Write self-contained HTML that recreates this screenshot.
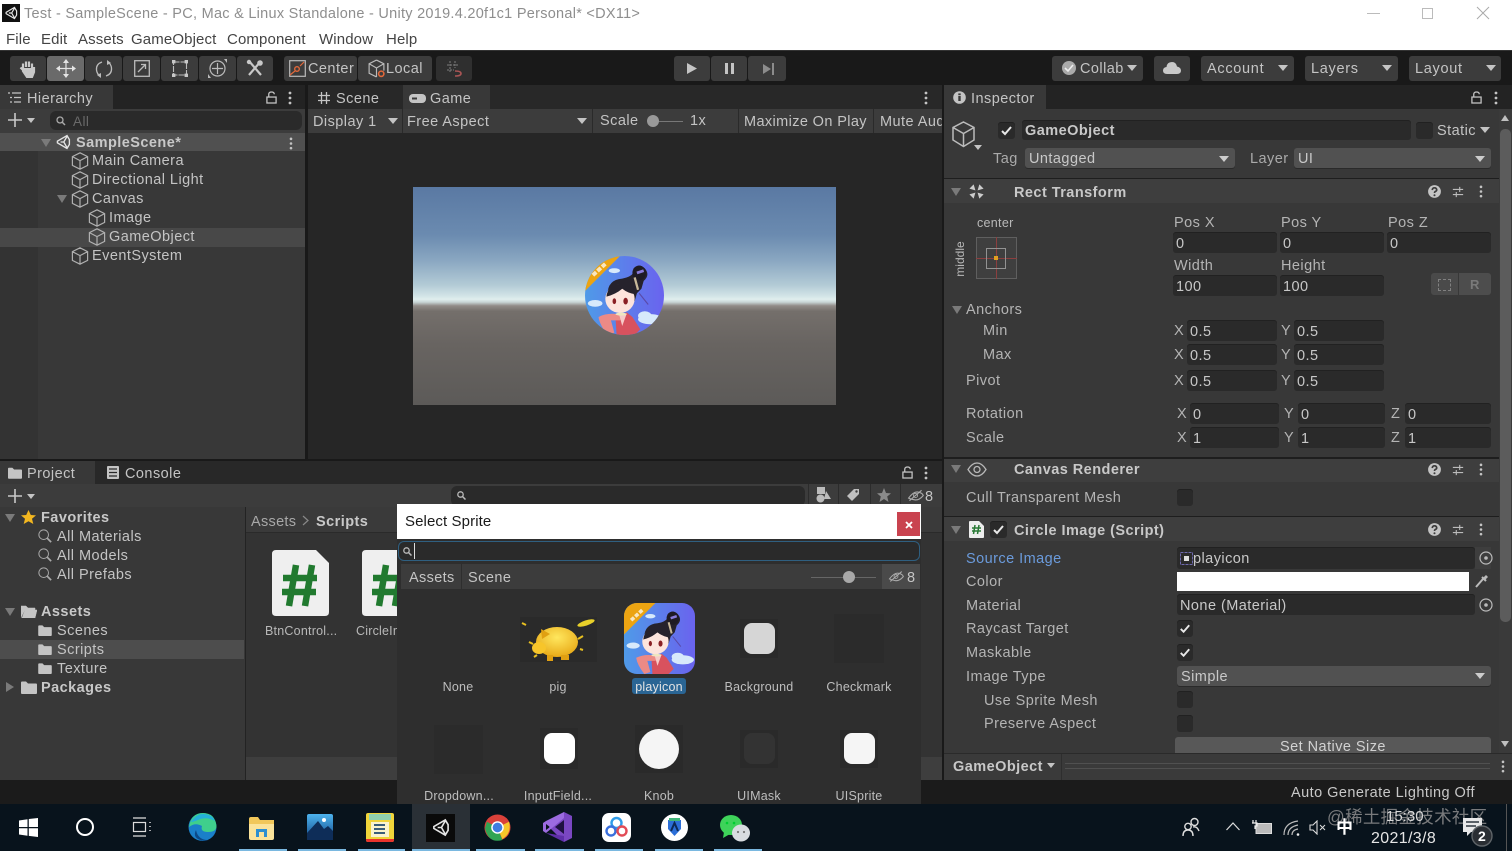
<!DOCTYPE html>
<html><head><meta charset="utf-8"><title>Unity</title>
<style>
*{box-sizing:border-box}
html,body{margin:0;padding:0;width:1512px;height:851px;overflow:hidden;background:#383838}
body{position:relative;font-family:"Liberation Sans","Noto Sans CJK SC",sans-serif;font-size:14.5px;letter-spacing:.45px;color:#c4c4c4;filter:blur(.3px)}
.a,.t,.f,.b,.cb,svg.a{position:absolute}
.t{white-space:nowrap;line-height:18px;height:18px;margin-top:1px}
.bd{font-weight:bold;color:#c8c8c8}
.f{background:#2a2a2a;border-radius:3px;box-shadow:inset 0 1px #212121;padding-left:3px;padding-top:1px;white-space:nowrap;overflow:hidden;color:#c8c8c8}
.b{background:#3c3c3c;border-radius:3px}
.cb{width:17px;height:17px;background:#2a2a2a;border-radius:3px;box-shadow:inset 0 1px #212121}
.dd{position:absolute;background:#515151;border-radius:3px;box-shadow:0 1px #2a2a2a;padding-left:4px;padding-top:1px;white-space:nowrap;color:#c8c8c8}
.ar{position:absolute;width:0;height:0;border-left:5px solid transparent;border-right:5px solid transparent;border-top:6px solid #c4c4c4}
.tri{position:absolute;width:0;height:0;border-left:5px solid transparent;border-right:5px solid transparent;border-top:8px solid #7a7a7a}
.tr{position:absolute;width:0;height:0;border-top:5px solid transparent;border-bottom:5px solid transparent;border-left:8px solid #7a7a7a}
.c{text-align:center;transform:translateX(-50%);font-size:12.5px;letter-spacing:.22px;color:#bdbdbd}
.m{color:#444;font-size:15px;letter-spacing:.12px;top:30px}
</style></head><body>
<svg width="0" height="0" style="position:absolute">
<defs>
<symbol id="cube" viewBox="0 0 18 18"><path d="M9 .8 16.6 4.6V13.4L9 17.2 1.400 13.400V4.600ZM1.400 4.600 9 8.600 16.600 4.600M9 8.600V17.200" fill="none" stroke="#b0b0b0" stroke-width="1.200"/></symbol>
<symbol id="folder" viewBox="0 0 16 13"><path d="M0 1.500Q0 .5 1 .5H5L7 2.500H15Q16 2.500 16 3.500V12Q16 13 15 13H1Q0 13 0 12Z" fill="#c4c4c4"/></symbol>
<symbol id="mag" viewBox="0 0 16 16"><circle cx="6.500" cy="6.500" r="5.500" fill="none" stroke="#aaa" stroke-width="1.100"/><path d="M10.500 10.500 15 15" stroke="#aaa" stroke-width="2"/></symbol>
<symbol id="chk" viewBox="0 0 17 17"><path d="M4 9 7 12 13 5" fill="none" stroke="#e8e8e8" stroke-width="2"/></symbol>
<symbol id="q" viewBox="0 0 14 14"><circle cx="7" cy="7" r="6.900" fill="#c4c4c4"/><path d="M4.600 5.400Q4.800 3 7 3T9.400 5.200Q9.400 6.300 7.800 7 7 7.400 7 8.600" fill="none" stroke="#3c3c3c" stroke-width="1.800"/><circle cx="7" cy="11" r="1.100" fill="#3c3c3c"/></symbol>
<symbol id="sl" viewBox="0 0 14 14"><path d="M1 4H13M1 10H13M9 1V7M5 7V13" stroke="#bbb" stroke-width="1.300" fill="none"/></symbol>
<symbol id="dots" viewBox="0 0 4 14"><circle cx="2" cy="2" r="1.400" fill="#c4c4c4"/><circle cx="2" cy="7" r="1.400" fill="#c4c4c4"/><circle cx="2" cy="12" r="1.400" fill="#c4c4c4"/></symbol>
<symbol id="lock" viewBox="0 0 12 14"><path d="M3 6V3.500Q3 1 6 1T9 3.500" fill="none" stroke="#c4c4c4" stroke-width="1.400"/><rect x="1" y="6.500" width="10" height="6.500" fill="none" stroke="#c4c4c4" stroke-width="1.400"/></symbol>
<symbol id="target" viewBox="0 0 14 14"><circle cx="7" cy="7" r="6" fill="none" stroke="#bbb" stroke-width="1.200"/><circle cx="7" cy="7" r="1.800" fill="#bbb"/></symbol>
<symbol id="unity" viewBox="0 0 20 20"><path d="M15 2 3 9V11L15 18 18 13V7ZM7 10H11M11 10 15 3M11 10 15 17" fill="none" stroke="#e4e4e4" stroke-width="1.700"/></symbol>
<symbol id="eye" viewBox="0 0 22 14"><path d="M3 10Q9 2 14 3T20 7Q15 13 10 12T3 10ZM4 13 18 1" fill="none" stroke="#aaa" stroke-width="1.300"/><circle cx="11" cy="7" r="2.400" fill="none" stroke="#aaa" stroke-width="1"/></symbol>
<symbol id="girl" viewBox="0 0 70 70" preserveAspectRatio="none">
<defs><linearGradient id="gb" x1="0" y1="0" x2="1" y2="0"><stop offset="0" stop-color="#4f9ae8"/><stop offset="1" stop-color="#6a63ee"/></linearGradient></defs>
<rect width="70" height="70" fill="url(#gb)"/>
<path d="M0 0H31L0 31Z" fill="#eca412"/>
<path d="M7 17 18 7" stroke="#f9e7c0" stroke-width="3.500" stroke-dasharray="4 1.500"/>
<g fill="#d7e9fb"><ellipse cx="26" cy="13" rx="5" ry="2.200"/><ellipse cx="9" cy="42" rx="6.500" ry="3"/><ellipse cx="58" cy="56" rx="11" ry="4.500"/><ellipse cx="53" cy="53" rx="6" ry="4"/></g>
<path d="M43 11Q48 6 53 11 58 17 52 22L50 29 46 33 44 40 30 30 20 34Q20 21 33 20 40 19 43 15Z" fill="#26222c"/>
<ellipse cx="48" cy="15" rx="6" ry="6.500" fill="#1f1b24"/>
<path d="M46 15 52 13" stroke="#8a7bd9" stroke-width="2.500"/>
<path d="M44 19 47 30" stroke="#c9b99a" stroke-width="2"/>
<path d="M48 33 56 43" stroke="#5a4aa8" stroke-width="1"/>
<ellipse cx="31" cy="38" rx="13" ry="12.500" fill="#fde4dc"/>
<path d="M19 36Q20 25 33 25 42 25 45 34 38 33 33 29 27 34 19 36Z" fill="#26222c"/>
<ellipse cx="36" cy="40" rx="2" ry="3" fill="#8a2024"/><ellipse cx="26" cy="40" rx="1.600" ry="2.600" fill="#8a2024"/>
<path d="M27 54 37 50 42 54 49 65 44 70H28Z" fill="#d8525e"/>
<path d="M12 54Q22 49 35 53L31 57 23 57 26 68 20 70Q13 61 12 54Z" fill="#ec8a86"/>
<path d="M30 51 37 51 33 62Z" fill="#f7cbc8"/>
<ellipse cx="32" cy="51.500" rx="5" ry="1.300" fill="#efe7c0"/>
</symbol>
</defs></svg>

<!-- title / menu -->
<div class="a" style="left:0;top:0;width:1512px;height:50px;background:#fff"></div>
<div class="a" style="left:2px;top:4px;width:18px;height:18px;background:#111"></div>
<svg class="a" style="left:4px;top:6px" width="14" height="14"><use href="#unity"/></svg>
<span class="t" style="left:24px;top:4px;color:#8e8e8e;font-size:14.5px;letter-spacing:.27px">Test - SampleScene - PC, Mac &amp; Linux Standalone - Unity 2019.4.20f1c1 Personal* &lt;DX11&gt;</span>
<span class="t m" style="left:6px">File</span>
<span class="t m" style="left:41px">Edit</span>
<span class="t m" style="left:78px">Assets</span>
<span class="t m" style="left:131px">GameObject</span>
<span class="t m" style="left:227px">Component</span>
<span class="t m" style="left:319px">Window</span>
<span class="t m" style="left:386px">Help</span>
<div class="a" style="left:1367px;top:13px;width:13px;height:1px;background:#bbb"></div>
<div class="a" style="left:1422px;top:8px;width:11px;height:11px;border:1px solid #bbb"></div>
<svg class="a" style="left:1476px;top:6px" width="14" height="14"><path d="M1 1 13 13M13 1 1 13" stroke="#aaa" stroke-width="1"/></svg>

<!-- toolbar -->
<div class="a" style="left:0;top:50px;width:1512px;height:35px;background:#191919;border-top:1px solid #333"></div>
<div class="b" style="left:10px;top:56px;width:36px;height:25px"></div>
<div class="b" style="left:47px;top:56px;width:37px;height:25px;background:#6a6a6a"></div>
<div class="b" style="left:85px;top:56px;width:37px;height:25px"></div>
<div class="b" style="left:123px;top:56px;width:37px;height:25px"></div>
<div class="b" style="left:161px;top:56px;width:37px;height:25px"></div>
<div class="b" style="left:199px;top:56px;width:37px;height:25px"></div>
<div class="b" style="left:237px;top:56px;width:36px;height:25px"></div>
<svg class="a" style="left:19px;top:59px" width="18" height="19" viewBox="0 0 18 19"><path d="M4 9V4.500M7 8V2.500M10 8V2.500M13 9V4.500M4 8 4 12 8 18H13L15 13V8M4 11 1.500 8.500" stroke="#c8c8c8" stroke-width="2.200" fill="none"/><path d="M4 9H15V14L13 18H8L4 13Z" fill="#c8c8c8"/></svg>
<svg class="a" style="left:56px;top:59px" width="20" height="19" viewBox="0 0 20 19"><path d="M10 3V16M3 9.500H17" stroke="#e4e4e4" stroke-width="1.200"/><path d="M10 0 13 4H7ZM10 19 13 15H7ZM0 9.500 4 6.500V12.500ZM20 9.500 16 6.500V12.500Z" fill="#e4e4e4"/></svg>
<svg class="a" style="left:95px;top:60px" width="18" height="18" viewBox="0 0 18 18"><path d="M7 2Q1 4 1.500 10 2 14 5 16M11 16Q17 14 16.500 8 16 4 13 2" fill="none" stroke="#bbb" stroke-width="1.300"/><path d="M12 0V5L16 3ZM6 18V13L2 15Z" fill="#bbb"/></svg>
<svg class="a" style="left:134px;top:60px" width="16" height="17" viewBox="0 0 16 17"><rect x=".7" y=".7" width="14.600" height="15.600" fill="none" stroke="#bbb" stroke-width="1.300"/><path d="M4 12 11 5M7 4.500H11.500V9" fill="none" stroke="#bbb" stroke-width="1.300"/></svg>
<svg class="a" style="left:172px;top:60px" width="16" height="17" viewBox="0 0 16 17"><rect x="1.500" y="2" width="13" height="13" fill="none" stroke="#bbb" stroke-width="1.100" stroke-dasharray="6 1"/><g fill="#c8c8c8"><rect width="3.400" height="3.400"/><rect x="12.600" width="3.400" height="3.400"/><rect y="13.600" width="3.400" height="3.400"/><rect x="12.600" y="13.600" width="3.400" height="3.400"/></g></svg>
<svg class="a" style="left:208px;top:59px" width="19" height="19" viewBox="0 0 19 19"><circle cx="9.500" cy="9.500" r="7.500" fill="none" stroke="#bbb" stroke-width="1.200"/><path d="M9.500 4V15M4 9.500H15" stroke="#bbb" stroke-width="1.200"/><path d="M16 0 19 0 19 4ZM0 19 3 19 0 15Z" fill="#bbb"/></svg>
<svg class="a" style="left:246px;top:59px" width="18" height="18" viewBox="0 0 18 18"><path d="M3 2 15 16M15 2 3 16" stroke="#c8c8c8" stroke-width="2.200"/><circle cx="3" cy="3" r="2.200" fill="#c8c8c8"/><circle cx="14" cy="4" r="2.800" fill="#c8c8c8"/></svg>
<div class="b" style="left:284px;top:56px;width:73px;height:25px"></div>
<div class="b" style="left:358px;top:56px;width:74px;height:25px"></div>
<div class="b" style="left:436px;top:56px;width:36px;height:25px;background:#2f2f2f"></div>
<svg class="a" style="left:289px;top:60px" width="17" height="17" viewBox="0 0 17 17"><rect x=".7" y=".7" width="15.600" height="15.600" fill="none" stroke="#bbb" stroke-width="1.200"/><circle cx="8" cy="9" r="2.300" fill="none" stroke="#e2683a" stroke-width="1.400"/><path d="M1 15 6 11M11 6 15 2" stroke="#e2683a" stroke-width="1.200"/></svg>
<span class="t" style="left:308px;top:59px">Center</span>
<svg class="a" style="left:367px;top:59px" width="19" height="19" viewBox="0 0 18 18"><path d="M9 1 16 4.500V11M9 17 2 13.500V4.500L9 1M2 4.500 9 8.500 16 4.500M9 8.500V17" fill="none" stroke="#bbb" stroke-width="1.100"/><circle cx="13.500" cy="14" r="2.500" fill="none" stroke="#e2683a" stroke-width="1.500"/></svg>
<span class="t" style="left:386px;top:59px">Local</span>
<svg class="a" style="left:446px;top:60px" width="16" height="17" viewBox="0 0 16 17"><path d="M1 5H12M1 10H8M4 1V13M9 1V8" stroke="#7c7c7c" stroke-width="1" stroke-dasharray="2 1"/><path d="M9 11Q15 11 15 13.500T9 16" fill="none" stroke="#a55" stroke-width="1.600"/></svg>
<div class="b" style="left:674px;top:56px;width:36px;height:25px"></div>
<div class="b" style="left:711px;top:56px;width:36px;height:25px"></div>
<div class="b" style="left:748px;top:56px;width:38px;height:25px"></div>
<svg class="a" style="left:686px;top:62px" width="12" height="13"><path d="M1 1 11 6.500 1 12Z" fill="#c4c4c4"/></svg>
<div class="a" style="left:725px;top:63px;width:3px;height:11px;background:#c4c4c4"></div>
<div class="a" style="left:731px;top:63px;width:3px;height:11px;background:#c4c4c4"></div>
<svg class="a" style="left:762px;top:63px" width="13" height="12"><path d="M1 1 9 6 1 11Z" fill="#8c8c8c"/><rect x="10" y="0" width="2" height="12" fill="#8c8c8c"/></svg>
<div class="b" style="left:1052px;top:56px;width:91px;height:25px"></div>
<div class="a" style="left:1062px;top:61px;width:14px;height:14px;border-radius:50%;background:#aaa"></div>
<svg class="a" style="left:1064px;top:63px" width="10" height="10"><path d="M1 5 4 8 9 2" fill="none" stroke="#eee" stroke-width="1.600"/></svg>
<span class="t" style="left:1080px;top:59px">Collab</span>
<div class="ar" style="left:1127px;top:65px"></div>
<div class="b" style="left:1154px;top:56px;width:36px;height:25px"></div>
<svg class="a" style="left:1163px;top:61px" width="18" height="14" viewBox="0 0 18 14"><path d="M4 13Q0 13 0 9.500 0 6.500 3.500 6 4 1 9 1 13 1 14 5.500 18 6.500 18 9.500 18 13 14 13Z" fill="#c8c8c8"/></svg>
<div class="b" style="left:1201px;top:56px;width:93px;height:25px"></div>
<span class="t" style="left:1207px;top:59px;letter-spacing:.7px">Account</span><div class="ar" style="left:1278px;top:65px"></div>
<div class="b" style="left:1305px;top:56px;width:93px;height:25px"></div>
<span class="t" style="left:1311px;top:59px;letter-spacing:.7px">Layers</span><div class="ar" style="left:1382px;top:65px"></div>
<div class="b" style="left:1409px;top:56px;width:92px;height:25px"></div>
<span class="t" style="left:1415px;top:59px;letter-spacing:.7px">Layout</span><div class="ar" style="left:1486px;top:65px"></div>

<!-- Hierarchy -->
<div class="a" style="left:0;top:85px;width:305px;height:24px;background:#232323"></div>
<div class="a" style="left:0;top:85px;width:113px;height:24px;background:#383838"></div>
<svg class="a" style="left:8px;top:92px" width="13" height="11"><path d="M0 1H2M4 1H13M2 5.500H4M6 5.500H13M2 10H4M6 10H13" stroke="#c4c4c4" stroke-width="1.300"/></svg>
<span class="t" style="left:27px;top:89px">Hierarchy</span>
<svg class="a" style="left:266px;top:91px" width="11" height="13"><use href="#lock"/></svg>
<svg class="a" style="left:288px;top:91px" width="4" height="14"><use href="#dots"/></svg>
<div class="a" style="left:0;top:109px;width:305px;height:24px;background:#3c3c3c"></div>
<svg class="a" style="left:8px;top:113px" width="14" height="14"><path d="M7 0V14M0 7H14" stroke="#c8c8c8" stroke-width="1.600"/></svg>
<div class="ar" style="left:27px;top:118px;border-left-width:4px;border-right-width:4px;border-top-width:5px"></div>
<div class="a" style="left:50px;top:111px;width:252px;height:19px;background:#2a2a2a;border-radius:6px"></div>
<svg class="a" style="left:56px;top:116px" width="11" height="10"><circle cx="4" cy="4" r="3" fill="none" stroke="#aaa" stroke-width="1.300"/><path d="M6 6 9 9" stroke="#aaa" stroke-width="1.500"/></svg>
<span class="t" style="left:73px;top:112px;color:#6a6a6a;font-size:13.500px">All</span>
<div class="a" style="left:0;top:133px;width:38px;height:326px;background:#333"></div>
<div class="a" style="left:38px;top:133px;width:267px;height:326px;background:#383838"></div>
<div class="a" style="left:0;top:133px;width:305px;height:18px;background:#505050"></div>
<div class="a" style="left:0;top:228px;width:305px;height:19px;background:#484848"></div>
<div class="tri" style="left:41px;top:139px"></div>
<svg class="a" style="left:55px;top:134px" width="16" height="16"><use href="#unity"/></svg>
<span class="t bd" style="left:76px;top:133px">SampleScene*</span>
<svg class="a" style="left:289px;top:137px" width="4" height="13"><use href="#dots"/></svg>
<svg class="a" style="left:71px;top:152px" width="18" height="18"><use href="#cube"/></svg><span class="t" style="left:92px;top:151px">Main Camera</span>
<svg class="a" style="left:71px;top:171px" width="18" height="18"><use href="#cube"/></svg><span class="t" style="left:92px;top:170px">Directional Light</span>
<div class="tri" style="left:57px;top:195px"></div>
<svg class="a" style="left:71px;top:190px" width="18" height="18"><use href="#cube"/></svg><span class="t" style="left:92px;top:189px">Canvas</span>
<svg class="a" style="left:88px;top:209px" width="18" height="18"><use href="#cube"/></svg><span class="t" style="left:109px;top:208px">Image</span>
<svg class="a" style="left:88px;top:228px" width="18" height="18"><use href="#cube"/></svg><span class="t" style="left:109px;top:227px">GameObject</span>
<svg class="a" style="left:71px;top:247px" width="18" height="18"><use href="#cube"/></svg><span class="t" style="left:92px;top:246px">EventSystem</span>

<!-- dividers -->
<div class="a" style="left:305px;top:85px;width:3px;height:375px;background:#191919"></div>
<div class="a" style="left:0;top:459px;width:943px;height:2px;background:#191919"></div>
<div class="a" style="left:942px;top:85px;width:2px;height:695px;background:#191919"></div>

<!-- Scene/Game -->
<div class="a" style="left:308px;top:85px;width:634px;height:24px;background:#282828"></div>
<div class="a" style="left:403px;top:85px;width:87px;height:24px;background:#383838"></div>
<svg class="a" style="left:318px;top:92px" width="12" height="12"><path d="M3.500 0V12M8.500 0V12M0 3.500H12M0 8.500H12" stroke="#c4c4c4" stroke-width="1.300"/></svg>
<span class="t" style="left:336px;top:89px">Scene</span>
<svg class="a" style="left:409px;top:94px" width="18" height="10"><rect width="17" height="9" rx="4" fill="#c4c4c4"/><rect x="3" y="3.500" width="5" height="2" fill="#383838"/></svg>
<span class="t" style="left:430px;top:89px">Game</span>
<svg class="a" style="left:924px;top:91px" width="4" height="14"><use href="#dots"/></svg>
<div class="a" style="left:308px;top:109px;width:634px;height:24px;background:#3c3c3c"></div>
<span class="t" style="left:313px;top:112px">Display 1</span><div class="ar" style="left:388px;top:118px"></div>
<div class="a" style="left:402px;top:109px;width:1px;height:24px;background:#2a2a2a"></div>
<span class="t" style="left:407px;top:112px">Free Aspect</span><div class="ar" style="left:577px;top:118px"></div>
<div class="a" style="left:592px;top:109px;width:1px;height:24px;background:#2a2a2a"></div>
<span class="t" style="left:600px;top:111px">Scale</span>
<div class="a" style="left:650px;top:121px;width:33px;height:1px;background:#777"></div>
<div class="a" style="left:647px;top:115px;width:12px;height:12px;border-radius:50%;background:#999"></div>
<span class="t" style="left:690px;top:111px">1x</span>
<div class="a" style="left:738px;top:109px;width:1px;height:24px;background:#2a2a2a"></div>
<span class="t" style="left:744px;top:112px;letter-spacing:.38px">Maximize On Play</span>
<div class="a" style="left:873px;top:109px;width:1px;height:24px;background:#2a2a2a"></div>
<div class="a" style="left:874px;top:109px;width:68px;height:24px;overflow:hidden"><span class="t" style="left:6px;top:3px">Mute Audio</span></div>
<div class="a" style="left:308px;top:133px;width:634px;height:326px;background:#262626"></div>
<div class="a" style="left:413px;top:187px;width:423px;height:218px;background:linear-gradient(180deg,#5a79a3 0%,#6b8bb0 22%,#8ba8c2 34%,#b3cbd6 45%,#d2e4e7 50%,#e0eeee 51.500%,#c9d6d6 52.800%,#918c88 54.500%,#746f6b 57%,#686461 72%,#5c5a58 100%)"></div>
<svg class="a" style="left:585px;top:256px;border-radius:50%" width="79" height="79"><use href="#girl" width="79" height="79"/></svg>

<!-- Inspector -->
<div class="a" style="left:944px;top:85px;width:568px;height:24px;background:#232323"></div>
<div class="a" style="left:944px;top:85px;width:102px;height:24px;background:#383838"></div>
<div class="a" style="left:944px;top:109px;width:568px;height:644px;background:#383838"></div>
<svg class="a" style="left:953px;top:91px" width="13" height="13" viewBox="0 0 13 13"><circle cx="6.500" cy="6.500" r="6.300" fill="#c4c4c4"/><rect x="5.300" y="5" width="2.400" height="5" fill="#383838"/><rect x="5.300" y="2.400" width="2.400" height="1.800" fill="#383838"/></svg>
<span class="t" style="left:971px;top:89px">Inspector</span>
<svg class="a" style="left:1471px;top:91px" width="11" height="13"><use href="#lock"/></svg>
<svg class="a" style="left:1494px;top:91px" width="4" height="14"><use href="#dots"/></svg>
<svg class="a" style="left:951px;top:120px" width="25" height="28"><path d="M12.500 2 23 7.500V20L12.500 26.500 2 20V7.500ZM2 7.500 12.500 13.500 23 7.500M12.500 13.500V26.500" fill="none" stroke="#bbb" stroke-width="1.500"/></svg>
<div class="ar" style="left:974px;top:145px;border-left-width:4px;border-right-width:4px;border-top-width:5px"></div>
<div class="cb" style="left:998px;top:122px"></div><svg class="a" style="left:998px;top:122px" width="17" height="17"><use href="#chk"/></svg>
<div class="f" style="left:1022px;top:120px;width:389px;height:20px;line-height:20px;font-weight:bold;padding-left:3px">GameObject</div>
<div class="cb" style="left:1416px;top:122px"></div>
<span class="t" style="left:1437px;top:121px">Static</span><div class="ar" style="left:1480px;top:127px"></div>
<span class="t" style="left:993px;top:149px;color:#aaa">Tag</span>
<div class="dd" style="left:1025px;top:148px;width:210px;height:20px;line-height:20px">Untagged</div><div class="ar" style="left:1219px;top:156px;border-top-color:#ccc"></div>
<span class="t" style="left:1250px;top:149px;color:#aaa">Layer</span>
<div class="dd" style="left:1294px;top:148px;width:197px;height:20px;line-height:20px">UI</div><div class="ar" style="left:1475px;top:156px;border-top-color:#ccc"></div>
<div class="a" style="left:944px;top:178px;width:555px;height:1px;background:#1e1e1e"></div>
<div class="a" style="left:944px;top:179px;width:555px;height:24px;background:#3e3e3e"></div>
<div class="tri" style="left:951px;top:188px"></div>
<svg class="a" style="left:969px;top:184px" width="15" height="15" viewBox="0 0 15 15"><path d="M6 6 1 4.500 4.500 1ZM9 6 14 4.500 10.500 1ZM6 9 1 10.500 4.500 14ZM9 9 14 10.500 10.500 14Z" fill="#ccc" stroke="#ccc" stroke-width=".6"/></svg>
<span class="t bd" style="left:1014px;top:183px">Rect Transform</span>
<svg class="a" style="left:1428px;top:185px" width="13" height="13"><use href="#q"/></svg>
<svg class="a" style="left:1452px;top:186px" width="12" height="12"><use href="#sl"/></svg>
<svg class="a" style="left:1479px;top:185px" width="4" height="13"><use href="#dots"/></svg>

<span class="t" style="left:977px;top:213px;font-size:12.500px;letter-spacing:.3px;color:#b8b8b8">center</span>
<span class="t" style="left:936px;top:249px;width:48px;text-align:center;transform:rotate(-90deg);font-size:12px;letter-spacing:0;color:#b8b8b8">middle</span>
<div class="a" style="left:976px;top:237px;width:41px;height:42px;background:#3f3f3f;border:1px solid #5f5f5f"></div>
<div class="a" style="left:976px;top:258px;width:41px;height:1px;background:#8c3f3f"></div>
<div class="a" style="left:996px;top:237px;width:1px;height:42px;background:#8c3f3f"></div>
<div class="a" style="left:986px;top:248px;width:20px;height:21px;border:1px solid #929292"></div>
<div class="a" style="left:994px;top:256px;width:4px;height:4px;background:#e0a020"></div>

<span class="t" style="left:1174px;top:213px;color:#b4b4b4">Pos X</span>
<span class="t" style="left:1281px;top:213px;color:#b4b4b4">Pos Y</span>
<span class="t" style="left:1388px;top:213px;color:#b4b4b4">Pos Z</span>
<div class="f" style="left:1173px;top:232px;width:104px;height:21px;line-height:22px">0</div>
<div class="f" style="left:1280px;top:232px;width:104px;height:21px;line-height:22px">0</div>
<div class="f" style="left:1387px;top:232px;width:104px;height:21px;line-height:22px">0</div>
<span class="t" style="left:1174px;top:256px;color:#b4b4b4">Width</span>
<span class="t" style="left:1281px;top:256px;color:#b4b4b4">Height</span>
<div class="f" style="left:1173px;top:275px;width:104px;height:21px;line-height:22px">100</div>
<div class="f" style="left:1280px;top:275px;width:104px;height:21px;line-height:22px">100</div>
<div class="a" style="left:1431px;top:273px;width:27px;height:22px;background:#4a4a4a;border-radius:3px 0 0 3px"></div>
<div class="a" style="left:1459px;top:273px;width:32px;height:22px;background:#4d4d4d;border-radius:0 3px 3px 0"></div>
<div class="a" style="left:1438px;top:279px;width:13px;height:12px;border:1px dashed #808080"></div>
<span class="t bd" style="left:1470px;top:275px;color:#7a7a7a;font-size:13px">R</span>

<div class="tri" style="left:952px;top:306px"></div>
<span class="t" style="left:966px;top:300px;color:#b4b4b4">Anchors</span>
<span class="t" style="left:983px;top:321px;color:#b4b4b4">Min</span>
<span class="t" style="left:1174px;top:321px;color:#b4b4b4">X</span><div class="f" style="left:1187px;top:320px;width:90px;height:21px;line-height:22px">0.5</div>
<span class="t" style="left:1281px;top:321px;color:#b4b4b4">Y</span><div class="f" style="left:1294px;top:320px;width:90px;height:21px;line-height:22px">0.5</div>
<span class="t" style="left:983px;top:345px;color:#b4b4b4">Max</span>
<span class="t" style="left:1174px;top:345px;color:#b4b4b4">X</span><div class="f" style="left:1187px;top:344px;width:90px;height:21px;line-height:22px">0.5</div>
<span class="t" style="left:1281px;top:345px;color:#b4b4b4">Y</span><div class="f" style="left:1294px;top:344px;width:90px;height:21px;line-height:22px">0.5</div>
<span class="t" style="left:966px;top:371px;color:#b4b4b4">Pivot</span>
<span class="t" style="left:1174px;top:371px;color:#b4b4b4">X</span><div class="f" style="left:1187px;top:370px;width:90px;height:21px;line-height:22px">0.5</div>
<span class="t" style="left:1281px;top:371px;color:#b4b4b4">Y</span><div class="f" style="left:1294px;top:370px;width:90px;height:21px;line-height:22px">0.5</div>
<span class="t" style="left:966px;top:404px;color:#b4b4b4">Rotation</span>
<span class="t" style="left:1177px;top:404px;color:#b4b4b4">X</span><div class="f" style="left:1190px;top:403px;width:89px;height:21px;line-height:22px">0</div>
<span class="t" style="left:1284px;top:404px;color:#b4b4b4">Y</span><div class="f" style="left:1298px;top:403px;width:87px;height:21px;line-height:22px">0</div>
<span class="t" style="left:1391px;top:404px;color:#b4b4b4">Z</span><div class="f" style="left:1405px;top:403px;width:86px;height:21px;line-height:22px">0</div>
<span class="t" style="left:966px;top:428px;color:#b4b4b4">Scale</span>
<span class="t" style="left:1177px;top:428px;color:#b4b4b4">X</span><div class="f" style="left:1190px;top:427px;width:89px;height:21px;line-height:22px">1</div>
<span class="t" style="left:1284px;top:428px;color:#b4b4b4">Y</span><div class="f" style="left:1298px;top:427px;width:87px;height:21px;line-height:22px">1</div>
<span class="t" style="left:1391px;top:428px;color:#b4b4b4">Z</span><div class="f" style="left:1405px;top:427px;width:86px;height:21px;line-height:22px">1</div>

<div class="a" style="left:944px;top:457px;width:555px;height:2px;background:#1e1e1e"></div>
<div class="a" style="left:944px;top:459px;width:555px;height:23px;background:#3e3e3e"></div>
<div class="tri" style="left:951px;top:465px"></div>
<svg class="a" style="left:967px;top:462px" width="20" height="15" viewBox="0 0 20 15"><path d="M1 7.500Q5 1 10 1T19 7.500Q15 14 10 14T1 7.500Z" fill="none" stroke="#b8b8b8" stroke-width="1.300"/><circle cx="10" cy="7.500" r="3" fill="none" stroke="#b8b8b8" stroke-width="1.300"/></svg>
<span class="t bd" style="left:1014px;top:460px">Canvas Renderer</span>
<svg class="a" style="left:1428px;top:463px" width="13" height="13"><use href="#q"/></svg>
<svg class="a" style="left:1452px;top:464px" width="12" height="12"><use href="#sl"/></svg>
<svg class="a" style="left:1479px;top:463px" width="4" height="13"><use href="#dots"/></svg>
<span class="t" style="left:966px;top:488px;color:#b4b4b4">Cull Transparent Mesh</span>
<div class="cb" style="left:1177px;top:489px;width:16px"></div>

<div class="a" style="left:944px;top:516px;width:555px;height:1px;background:#1e1e1e"></div>
<div class="a" style="left:944px;top:517px;width:555px;height:24px;background:#3e3e3e"></div>
<div class="tri" style="left:951px;top:526px"></div>
<svg class="a" style="left:969px;top:521px" width="15" height="17" viewBox="0 0 15 17"><path d="M0 1Q0 0 1 0H10L15 5V16Q15 17 14 17H1Q0 17 0 16Z" fill="#eee"/><path d="M6 4 4.500 13M10 4 8.500 13M3 7H12M3 10H12" stroke="#2a7a36" stroke-width="1.500"/></svg>
<div class="cb" style="left:990px;top:521px"></div><svg class="a" style="left:990px;top:521px" width="17" height="17"><use href="#chk"/></svg>
<span class="t bd" style="left:1014px;top:521px">Circle Image (Script)</span>
<svg class="a" style="left:1428px;top:523px" width="13" height="13"><use href="#q"/></svg>
<svg class="a" style="left:1452px;top:524px" width="12" height="12"><use href="#sl"/></svg>
<svg class="a" style="left:1479px;top:523px" width="4" height="13"><use href="#dots"/></svg>

<span class="t" style="left:966px;top:549px;color:#6b9bdc">Source Image</span>
<div class="f" style="left:1177px;top:547px;width:298px;height:22px;line-height:23px;padding-left:16px">playicon</div>
<svg class="a" style="left:1180px;top:552px" width="13" height="13"><rect x=".5" y=".5" width="12" height="12" fill="none" stroke="#6e69ad" stroke-dasharray="3 1"/><rect x="4" y="4" width="5" height="5" fill="#ddd"/></svg>
<div class="a" style="left:1475px;top:547px;width:16px;height:22px;background:#3e3e3e"></div>
<svg class="a" style="left:1479px;top:551px" width="14" height="14"><use href="#target"/></svg>
<span class="t" style="left:966px;top:572px;color:#b4b4b4">Color</span>
<div class="a" style="left:1177px;top:572px;width:292px;height:19px;background:#fff"></div>
<svg class="a" style="left:1475px;top:574px" width="13" height="14" viewBox="0 0 13 14"><path d="M1 13 8 5M7 3 11 7" stroke="#bbb" stroke-width="2"/><path d="M8 4 11 1 13 3 10 6Z" fill="#bbb"/></svg>
<span class="t" style="left:966px;top:596px;color:#b4b4b4">Material</span>
<div class="f" style="left:1177px;top:594px;width:298px;height:21px;line-height:22px">None (Material)</div>
<svg class="a" style="left:1479px;top:598px" width="14" height="14"><use href="#target"/></svg>
<span class="t" style="left:966px;top:619px;color:#b4b4b4">Raycast Target</span>
<div class="cb" style="left:1177px;top:620px;width:16px"></div><svg class="a" style="left:1177px;top:620px" width="16" height="17"><use href="#chk"/></svg>
<span class="t" style="left:966px;top:643px;color:#b4b4b4">Maskable</span>
<div class="cb" style="left:1177px;top:644px;width:16px"></div><svg class="a" style="left:1177px;top:644px" width="16" height="17"><use href="#chk"/></svg>
<span class="t" style="left:966px;top:667px;color:#b4b4b4">Image Type</span>
<div class="dd" style="left:1177px;top:666px;width:314px;height:20px;line-height:20px">Simple</div><div class="ar" style="left:1475px;top:673px;border-top-color:#ccc"></div>
<span class="t" style="left:984px;top:691px;color:#b4b4b4">Use Sprite Mesh</span>
<div class="cb" style="left:1177px;top:691px;width:16px"></div>
<span class="t" style="left:984px;top:714px;color:#b4b4b4">Preserve Aspect</span>
<div class="cb" style="left:1177px;top:715px;width:16px"></div>
<div class="a" style="left:1175px;top:737px;width:316px;height:16px;background:#585858;border-radius:3px 3px 0 0;overflow:hidden;text-align:center;line-height:21px;color:#d2d2d2">Set Native Size</div>

<div class="a" style="left:1499px;top:109px;width:13px;height:644px;background:#3a3a3a"></div>
<div class="a" style="left:1500px;top:129px;width:11px;height:493px;background:#5c5c5c;border-radius:5px"></div>
<div class="ar" style="left:1501px;top:115px;border-top:0;border-bottom:6px solid #c0c0c0;border-left-width:4px;border-right-width:4px"></div>
<div class="ar" style="left:1501px;top:741px;border-left-width:4px;border-right-width:4px;border-top-color:#c0c0c0"></div>

<div class="a" style="left:944px;top:753px;width:568px;height:27px;background:#3a3a3a;border-top:1px solid #2a2a2a"></div>
<div class="a" style="left:1061px;top:754px;width:1px;height:26px;background:#2e2e2e"></div>
<span class="t bd" style="left:953px;top:757px">GameObject</span>
<div class="ar" style="left:1047px;top:763px;border-left-width:4px;border-right-width:4px;border-top-width:5px"></div>
<div class="a" style="left:1065px;top:763px;width:425px;height:1px;background:#505050"></div>
<div class="a" style="left:1065px;top:768px;width:425px;height:1px;background:#505050"></div>
<svg class="a" style="left:1501px;top:760px" width="4" height="13"><use href="#dots"/></svg>

<!-- Project -->
<div class="a" style="left:0;top:461px;width:942px;height:23px;background:#282828"></div>
<div class="a" style="left:0;top:461px;width:95px;height:23px;background:#383838"></div>
<svg class="a" style="left:8px;top:467px" width="14" height="12"><use href="#folder"/></svg>
<span class="t" style="left:27px;top:464px">Project</span>
<svg class="a" style="left:107px;top:466px" width="12" height="13" viewBox="0 0 12 13"><rect width="12" height="13" rx="1" fill="#c4c4c4"/><path d="M2 3H10M2 6.500H10M2 10H10" stroke="#282828" stroke-width="1.200"/></svg>
<span class="t" style="left:125px;top:464px">Console</span>
<svg class="a" style="left:902px;top:466px" width="11" height="13"><use href="#lock"/></svg>
<svg class="a" style="left:924px;top:466px" width="4" height="14"><use href="#dots"/></svg>
<div class="a" style="left:0;top:484px;width:942px;height:23px;background:#3c3c3c"></div>
<svg class="a" style="left:8px;top:489px" width="14" height="14"><path d="M7 0V14M0 7H14" stroke="#c8c8c8" stroke-width="1.600"/></svg>
<div class="ar" style="left:27px;top:494px;border-left-width:4px;border-right-width:4px;border-top-width:5px"></div>
<div class="a" style="left:451px;top:486px;width:354px;height:20px;background:#2a2a2a;border-radius:6px"></div>
<svg class="a" style="left:457px;top:491px" width="9" height="9"><circle cx="3.500" cy="3.500" r="2.700" fill="none" stroke="#bbb" stroke-width="1.300"/><path d="M5.500 5.500 8.500 8.500" stroke="#bbb" stroke-width="1.500"/></svg>
<div class="a" style="left:808px;top:484px;width:1px;height:20px;background:#2c2c2c"></div>
<div class="a" style="left:838px;top:484px;width:1px;height:20px;background:#2c2c2c"></div>
<div class="a" style="left:870px;top:484px;width:1px;height:20px;background:#2c2c2c"></div>
<div class="a" style="left:900px;top:484px;width:1px;height:20px;background:#2c2c2c"></div>
<svg class="a" style="left:816px;top:487px" width="15" height="16"><rect x="1" y="0" width="8" height="7" fill="#bbb"/><circle cx="4.500" cy="11.500" r="4" fill="#bbb"/><path d="M10 4 15 12H8Z" fill="#bbb"/></svg>
<svg class="a" style="left:846px;top:488px" width="14" height="14"><path d="M1 8 8 1H13V6L6 13Z" fill="#c0c0c0"/><circle cx="10.500" cy="3.500" r="1.200" fill="#3c3c3c"/></svg>
<svg class="a" style="left:877px;top:488px" width="14" height="14"><path d="M7 0 9 5 14 5.400 10.200 8.500 11.500 14 7 11 2.500 14 3.800 8.500 0 5.400 5 5Z" fill="#8a8a8a"/></svg>
<svg class="a" style="left:906px;top:489px" width="19" height="13"><use href="#eye"/></svg>
<span class="t" style="left:925px;top:487px">8</span>

<div class="a" style="left:0;top:507px;width:245px;height:273px;background:#383838"></div>
<div class="a" style="left:245px;top:507px;width:1px;height:273px;background:#232323"></div>
<div class="a" style="left:246px;top:507px;width:696px;height:26px;background:#3a3a3a;border-bottom:1px solid #2a2a2a"></div>
<div class="a" style="left:246px;top:533px;width:696px;height:224px;background:#333"></div>
<div class="a" style="left:246px;top:757px;width:696px;height:23px;background:#3e3e3e"></div>
<div class="tri" style="left:5px;top:514px"></div>
<svg class="a" style="left:21px;top:510px" width="15" height="14"><path d="M7.500 0 9.800 5 15 5.400 11 8.800 12.300 14 7.500 11.200 2.700 14 4 8.800 0 5.400 5.200 5Z" fill="#f3b720"/></svg>
<span class="t bd" style="left:41px;top:508px">Favorites</span>
<svg class="a" style="left:38px;top:529px" width="14" height="14"><use href="#mag"/></svg><span class="t" style="left:57px;top:527px">All Materials</span>
<svg class="a" style="left:38px;top:548px" width="14" height="14"><use href="#mag"/></svg><span class="t" style="left:57px;top:546px">All Models</span>
<svg class="a" style="left:38px;top:567px" width="14" height="14"><use href="#mag"/></svg><span class="t" style="left:57px;top:565px">All Prefabs</span>
<div class="tri" style="left:5px;top:608px"></div>
<svg class="a" style="left:21px;top:605px" width="16" height="13" viewBox="0 0 16 13"><path d="M0 13V1H5L7 3H14V5H4L1 13H14L16 5H4" fill="#c4c4c4" stroke="#c4c4c4" stroke-width=".5"/></svg>
<span class="t bd" style="left:41px;top:602px">Assets</span>
<div class="a" style="left:0;top:640px;width:244px;height:19px;background:#4d4d4d"></div>
<svg class="a" style="left:38px;top:625px" width="14" height="11"><use href="#folder"/></svg><span class="t" style="left:57px;top:621px">Scenes</span>
<svg class="a" style="left:38px;top:644px" width="14" height="11"><use href="#folder"/></svg><span class="t" style="left:57px;top:640px">Scripts</span>
<svg class="a" style="left:38px;top:663px" width="14" height="11"><use href="#folder"/></svg><span class="t" style="left:57px;top:659px">Texture</span>
<div class="tr" style="left:6px;top:682px"></div>
<svg class="a" style="left:21px;top:681px" width="16" height="13"><use href="#folder"/></svg>
<span class="t bd" style="left:41px;top:678px">Packages</span>
<span class="t" style="left:251px;top:512px;color:#a8a8a8;letter-spacing:.3px">Assets</span>
<svg class="a" style="left:302px;top:515px" width="7" height="11"><path d="M1 1 6 5.500 1 10" fill="none" stroke="#888" stroke-width="1.200"/></svg>
<span class="t bd" style="left:316px;top:512px">Scripts</span>
<svg class="a" style="left:272px;top:550px" width="57" height="66" viewBox="0 0 57 66"><path d="M0 4Q0 0 4 0H44L57 13V62Q57 66 53 66H4Q0 66 0 62Z" fill="#efefef"/><path d="M24 15 17 56M40 15 33 56M11 28H45M10 42H44" stroke="#217a2f" stroke-width="6.500"/></svg>
<span class="t" style="left:265px;top:621px;font-size:12.500px;letter-spacing:.22px;color:#b8b8b8">BtnControl...</span>
<svg class="a" style="left:362px;top:550px" width="35" height="66" viewBox="0 0 35 66"><path d="M0 4Q0 0 4 0H35V66H4Q0 66 0 62Z" fill="#efefef"/><path d="M24 15 17 56M40 15 33 56M11 28H45M10 42H44" stroke="#217a2f" stroke-width="6.500"/></svg>
<span class="t" style="left:356px;top:621px;font-size:12.500px;color:#b8b8b8;width:41px;overflow:hidden;letter-spacing:.2px">CircleImage</span>

<!-- Status -->
<div class="a" style="left:0;top:780px;width:1512px;height:24px;background:#1b1b1b"></div>
<span class="t" style="left:1291px;top:783px;color:#c8c8c8">Auto Generate Lighting Off</span>

<!-- Taskbar -->
<div class="a" style="left:0;top:804px;width:1512px;height:47px;background:#08131c"></div>
<div class="a" style="left:412px;top:804px;width:58px;height:47px;background:#2a3036"></div>
<div class="a" style="left:239px;top:849px;width:48px;height:2px;background:#7ab8e0"></div>
<div class="a" style="left:298px;top:849px;width:48px;height:2px;background:#7ab8e0"></div>
<div class="a" style="left:358px;top:849px;width:47px;height:2px;background:#7ab8e0"></div>
<div class="a" style="left:412px;top:849px;width:58px;height:2px;background:#7ab8e0"></div>
<div class="a" style="left:476px;top:849px;width:49px;height:2px;background:#7ab8e0"></div>
<div class="a" style="left:535px;top:849px;width:49px;height:2px;background:#7ab8e0"></div>
<div class="a" style="left:595px;top:849px;width:48px;height:2px;background:#7ab8e0"></div>
<div class="a" style="left:655px;top:849px;width:48px;height:2px;background:#7ab8e0"></div>
<div class="a" style="left:714px;top:849px;width:48px;height:2px;background:#7ab8e0"></div>
<svg class="a" style="left:19px;top:818px" width="19" height="19"><path d="M0 2.500 8.500 1.300V9H0ZM9.800 1 19 0V9H9.800ZM0 10.300H8.500V17.800L0 16.500ZM9.800 10.300H19V19L9.800 17.900Z" fill="#fff"/></svg>
<div class="a" style="left:76px;top:818px;width:18px;height:18px;border:2.500px solid #fff;border-radius:50%"></div>
<svg class="a" style="left:132px;top:817px" width="20" height="20"><path d="M1 1H14M1 19H14" stroke="#ddd" stroke-width="1.300"/><rect x="1.500" y="5.500" width="12" height="9" fill="none" stroke="#ddd" stroke-width="1.200"/><path d="M18 5V6M18 9V10M18 13V14" stroke="#ddd" stroke-width="1.500"/></svg>
<svg class="a" style="left:188px;top:812px" width="29" height="30" viewBox="0 0 29 30"><circle cx="14.500" cy="15" r="14" fill="#1a7fc9"/><path d="M1 15Q3 1 15 1 27 1 28.500 14 28.500 20 20 20 12 20 14 14 7 10 1 15Z" fill="#3fcf8c"/><path d="M3 10Q8 2 15 2 24 2 27 9 18 4 10 8 5 10 3 10Z" fill="#25b0d8"/><path d="M8 18Q10 28 20 28 15 30 10 27 5 24 8 18Z" fill="#0c4a88"/></svg>
<svg class="a" style="left:249px;top:816px" width="25" height="24" viewBox="0 0 25 24"><path d="M0 3Q0 1 2 1H9L11 4H25V22H0Z" fill="#f1c75a"/><path d="M0 8H25V22Q25 24 23 24H2Q0 24 0 22Z" fill="#fbe39a"/><path d="M7 13H18V21H15V16H10V21H7Z" fill="#2e8fd0"/></svg>
<svg class="a" style="left:307px;top:814px" width="26" height="26" viewBox="0 0 26 26"><defs><linearGradient id="ph" x1="0" y1="0" x2="0" y2="1"><stop offset="0" stop-color="#4db3ee"/><stop offset="1" stop-color="#134a8a"/></linearGradient></defs><rect width="26" height="26" rx="2" fill="url(#ph)"/><path d="M0 26V19L11 7 17 15 21 12 26 17V26Z" fill="#0e2d58"/><circle cx="17" cy="6" r="2" fill="#fff"/></svg>
<svg class="a" style="left:366px;top:813px" width="28" height="29" viewBox="0 0 28 29"><rect width="28" height="29" rx="2" fill="#f0d53a"/><rect x="3" y="1" width="22" height="6" fill="#8fd0ae"/><rect x="5" y="9" width="18" height="15" fill="#f9f4cf"/><path d="M8 12H19M8 16 19 16M8 20H19" stroke="#1f4a6e" stroke-width="1.800"/><path d="M0 26H14V29H2Q0 29 0 27ZM14 26H28V27Q28 29 26 29H14Z" fill="#e9332d"/></svg>
<div class="a" style="left:426px;top:814px;width:29px;height:28px;background:#0a0a0a"></div>
<svg class="a" style="left:431px;top:818px" width="19" height="19"><use href="#unity"/></svg>
<svg class="a" style="left:484px;top:813px" width="27" height="29" viewBox="0 0 28 28"><circle cx="14" cy="14" r="13.500" fill="#d9413a"/><path d="M14 14 26 8Q29 20 19 26L14 14Z" fill="#f6c62a"/><path d="M14 14 19 27Q5 31 1 15 2 12 3 8Z" fill="#31a553"/><circle cx="14" cy="14" r="6.500" fill="#fff"/><circle cx="14" cy="14" r="5" fill="#3f7de0"/></svg>
<svg class="a" style="left:543px;top:812px" width="29" height="30" viewBox="0 0 29 30"><path d="M21 0 29 4V26L21 30 6 15Z" fill="#7a47c2"/><path d="M21 8V22L12 15Z" fill="#1f1140"/><path d="M3 9 0 11V19L3 21 21 6V0ZM3 12 7 15 3 18Z" fill="#9c6be0"/><path d="M3 21 21 24V30Z" fill="#5e2fa8"/></svg>
<div class="a" style="left:602px;top:813px;width:29px;height:29px;background:#fff;border-radius:7px"></div>
<svg class="a" style="left:605px;top:816px" width="23" height="23" viewBox="0 0 23 23"><circle cx="11.500" cy="7" r="5" fill="none" stroke="#2f9ce8" stroke-width="2.400"/><circle cx="6" cy="15" r="4.500" fill="none" stroke="#3a6fdc" stroke-width="2.400"/><circle cx="17" cy="15" r="4.500" fill="none" stroke="#e24b56" stroke-width="2.400"/></svg>
<div class="a" style="left:661px;top:814px;width:27px;height:27px;background:#fff;border-radius:50%"></div>
<svg class="a" style="left:667px;top:818px" width="15" height="19" viewBox="0 0 15 19"><path d="M1 2H14V11L7.500 18 1 11Z" fill="#2c6fd8"/><path d="M4 13 7.500 5 11 13" fill="none" stroke="#0d2a55" stroke-width="2"/><rect x="2" y="0" width="11" height="3" fill="#3fb57a"/></svg>
<svg class="a" style="left:720px;top:814px" width="30" height="28" viewBox="0 0 30 28"><ellipse cx="11" cy="11" rx="11" ry="10" fill="#3ed35a"/><path d="M4 18 3 24 10 20Z" fill="#3ed35a"/><ellipse cx="21" cy="19" rx="9" ry="8.500" fill="#d8dce0"/><circle cx="7" cy="9" r="1.300" fill="#0c3"/><circle cx="14" cy="9" r="1.300" fill="#0c3"/><circle cx="18" cy="18" r="1.100" fill="#777"/><circle cx="24" cy="18" r="1.100" fill="#777"/></svg>

<svg class="a" style="left:1182px;top:817px" width="18" height="20" viewBox="0 0 18 20"><circle cx="12.500" cy="5" r="3.500" fill="none" stroke="#ddd" stroke-width="1.400"/><circle cx="6" cy="9.500" r="3.200" fill="none" stroke="#ddd" stroke-width="1.400"/><path d="M1 19Q1 13 6 13T11 19M11 10Q15 9 17 14" fill="none" stroke="#ddd" stroke-width="1.400"/></svg>
<svg class="a" style="left:1226px;top:822px" width="14" height="9"><path d="M.5 8 7 1 13.500 8" fill="none" stroke="#ddd" stroke-width="1.200"/></svg>
<svg class="a" style="left:1252px;top:820px" width="20" height="14" viewBox="0 0 20 14"><rect x="4" y="3.500" width="15.500" height="10" fill="#bbb" stroke="#ddd"/><path d="M1 0V3M4 0V3M0 3H5V6H3V9" fill="none" stroke="#eee" stroke-width="1.200"/></svg>
<svg class="a" style="left:1283px;top:820px" width="17" height="16" viewBox="0 0 17 16"><path d="M1 15Q1 3 15 1M5 15Q5 7 15 5M9 15Q9 10 15 9" fill="none" stroke="#bbb" stroke-width="1.200"/><circle cx="15" cy="14.500" r="1.300" fill="#eee"/></svg>
<svg class="a" style="left:1309px;top:820px" width="18" height="15" viewBox="0 0 18 15"><path d="M1 5H4L8 1V14L4 10H1Z" fill="none" stroke="#ddd" stroke-width="1.100"/><path d="M11 5 16 10M16 5 11 10" stroke="#ddd" stroke-width="1"/></svg>
<span class="t" style="left:1327px;top:805px;font-size:17.500px;letter-spacing:.3px;color:#8d8d8d;height:22px;line-height:22px;opacity:.85">@稀土掘金技术社区</span>
<span class="t" style="left:1336px;top:817px;font-size:17px;letter-spacing:0;font-weight:bold;color:#fff;line-height:20px;height:20px">中</span>
<span class="t" style="left:1386px;top:807px;color:#d8d8d8;letter-spacing:0;font-size:15px">15:30</span>
<span class="t" style="left:1371px;top:829px;color:#e6e6e6;letter-spacing:.35px;font-size:16px">2021/3/8</span>
<svg class="a" style="left:1463px;top:817px" width="30" height="30" viewBox="0 0 30 30"><path d="M0 1H19V15H8L4 19V15H0Z" fill="#e8e8e8"/><path d="M3 5H16M3 9H13" stroke="#08131c" stroke-width="1.300"/><circle cx="19" cy="19" r="10" fill="#2a2e33" stroke="#5f6468" stroke-width="1.400"/></svg>
<span class="t" style="left:1478px;top:826px;font-weight:bold;color:#fff;letter-spacing:0;font-size:14px">2</span>
<div class="a" style="left:1506px;top:804px;width:1px;height:47px;background:#555"></div>

<!-- Dialog -->
<div class="a" style="left:397px;top:504px;width:524px;height:300px;background:#2e2e2e"></div>
<div class="a" style="left:397px;top:504px;width:524px;height:35px;background:#fff"></div>
<span class="t" style="left:405px;top:512px;color:#1a1a1a;font-size:15px;letter-spacing:.1px">Select Sprite</span>
<div class="a" style="left:897px;top:512px;width:23px;height:24px;background:#c9434f"></div>
<svg class="a" style="left:905px;top:521px" width="8" height="8"><path d="M1 1 7 7M7 1 1 7" stroke="#fff" stroke-width="1.800"/></svg>
<div class="a" style="left:398px;top:541px;width:522px;height:20px;background:#2a2a2a;border:1px solid #2f5f80;border-radius:6px"></div>
<svg class="a" style="left:403px;top:547px" width="9" height="9"><circle cx="3.500" cy="3.500" r="2.700" fill="none" stroke="#bbb" stroke-width="1.300"/><path d="M5.500 5.500 8.500 8.500" stroke="#bbb" stroke-width="1.500"/></svg>
<div class="a" style="left:414px;top:543px;width:1px;height:16px;background:#ddd"></div>
<div class="a" style="left:401px;top:564px;width:519px;height:25px;background:#3c3c3c"></div>
<div class="a" style="left:461px;top:564px;width:1px;height:25px;background:#2e2e2e"></div>
<span class="t" style="left:409px;top:568px;letter-spacing:.35px">Assets</span>
<span class="t" style="left:468px;top:568px">Scene</span>
<div class="a" style="left:811px;top:577px;width:65px;height:1px;background:#666"></div>
<div class="a" style="left:843px;top:571px;width:12px;height:12px;border-radius:50%;background:#a8a8a8"></div>
<div class="a" style="left:882px;top:564px;width:38px;height:25px;background:#4a4a4a"></div>
<svg class="a" style="left:887px;top:570px" width="18" height="13"><use href="#eye"/></svg>
<span class="t" style="left:907px;top:568px">8</span>

<span class="t c" style="left:458px;top:677px">None</span>
<div class="a" style="left:520px;top:617px;width:77px;height:45px;background:#2a2a2a"></div>
<svg class="a" style="left:520px;top:615px" width="76" height="48" viewBox="0 0 76 48"><defs><radialGradient id="gd" cx=".5" cy=".35" r=".7"><stop offset="0" stop-color="#ffe75e"/><stop offset="1" stop-color="#e6a512"/></radialGradient></defs><ellipse cx="37" cy="27" rx="21" ry="15" fill="url(#gd)"/><ellipse cx="19" cy="33" rx="7" ry="6" fill="#f7c52a"/><path d="M21 14 30 19 22 24ZM27 40H33V46H27ZM41 40H49V45H41Z" fill="#e0a012"/><ellipse cx="66" cy="8" rx="9" ry="2.600" fill="#e8d02a" transform="rotate(-18 66 8)"/><path d="M2 8 6 10M9 27 13 29M58 24 63 21M14 42 17 40M60 34 63 35" stroke="#e8c020" stroke-width="2"/></svg>
<span class="t c" style="left:558px;top:677px">pig</span>
<svg class="a" style="left:624px;top:603px;border-radius:13px" width="71" height="71"><use href="#girl" width="71" height="71"/></svg>
<div class="a" style="left:632px;top:678px;width:54px;height:16px;background:#2a6594;border-radius:3px"></div>
<span class="t c" style="left:659px;top:677px;color:#e4e4e4">playicon</span>
<div class="a" style="left:740px;top:619px;width:38px;height:39px;background:#2a2a2a"></div>
<div class="a" style="left:744px;top:623px;width:31px;height:31px;background:#d6d6d6;border-radius:8px"></div>
<span class="t c" style="left:759px;top:677px">Background</span>
<div class="a" style="left:834px;top:614px;width:50px;height:49px;background:#2b2b2b"></div>
<span class="t c" style="left:859px;top:677px">Checkmark</span>
<div class="a" style="left:434px;top:725px;width:49px;height:49px;background:#2b2b2b"></div>
<span class="t c" style="left:459px;top:786px">Dropdown...</span>
<div class="a" style="left:540px;top:728px;width:38px;height:41px;background:#2a2a2a"></div>
<div class="a" style="left:544px;top:733px;width:31px;height:31px;background:#fff;border-radius:8px"></div>
<span class="t c" style="left:558px;top:786px">InputField...</span>
<div class="a" style="left:635px;top:725px;width:48px;height:48px;background:#2a2a2a"></div>
<div class="a" style="left:639px;top:729px;width:40px;height:40px;background:#f5f5f5;border-radius:50%"></div>
<span class="t c" style="left:659px;top:786px">Knob</span>
<div class="a" style="left:740px;top:730px;width:38px;height:38px;background:#2a2a2a"></div>
<div class="a" style="left:744px;top:733px;width:31px;height:31px;background:#333;border-radius:8px"></div>
<span class="t c" style="left:759px;top:786px">UIMask</span>
<div class="a" style="left:840px;top:730px;width:38px;height:38px;background:#2a2a2a"></div>
<div class="a" style="left:844px;top:733px;width:31px;height:31px;background:#f5f5f5;border-radius:8px"></div>
<span class="t c" style="left:859px;top:786px">UISprite</span>
</body></html>
